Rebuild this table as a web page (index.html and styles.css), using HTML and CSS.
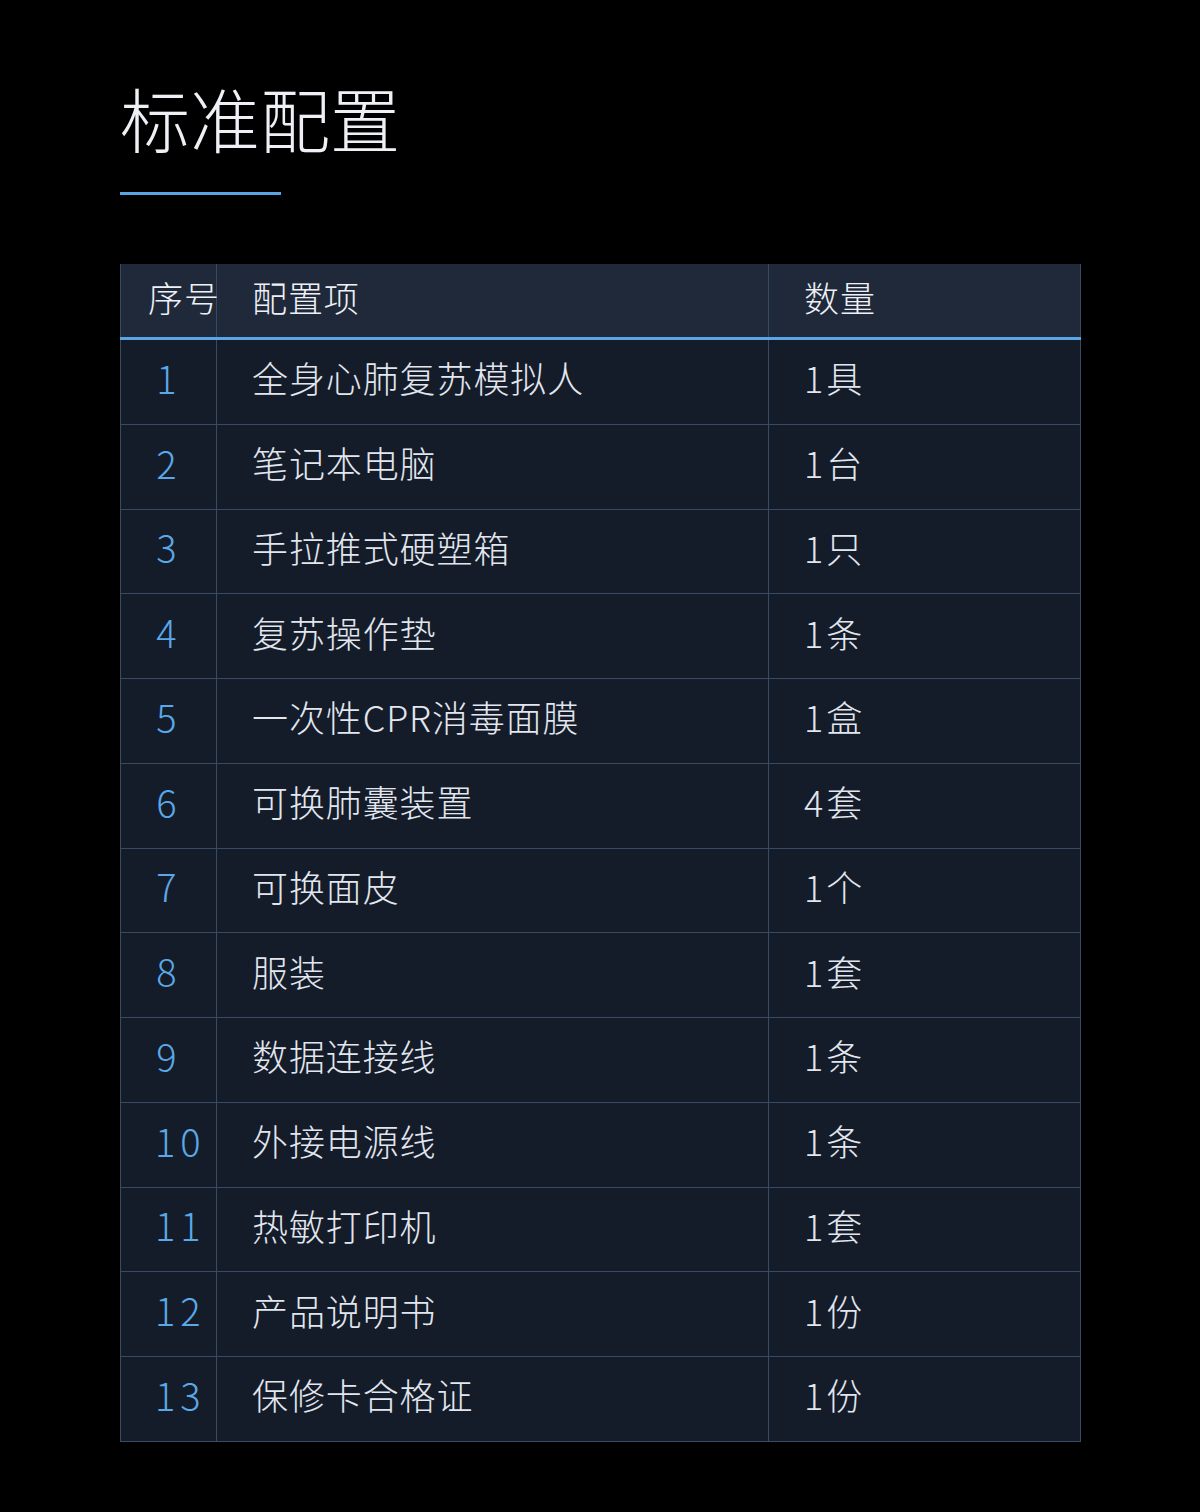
FILE: index.html
```html
<!DOCTYPE html>
<html lang="zh">
<head>
<meta charset="utf-8">
<title>标准配置</title>
<link rel="stylesheet" href="styles.css">
</head>
<body>
<main class="page">
  <h1 class="title">标准配置</h1>
  <div class="rule"></div>
  <table class="spec">
    <colgroup>
      <col class="w-no">
      <col class="w-item">
      <col class="w-qty">
    </colgroup>
    <thead>
      <tr><th class="c-no">序号</th><th class="c-item">配置项</th><th class="c-qty">数量</th></tr>
    </thead>
    <tbody>
      <tr><td class="c-no">1</td><td class="c-item">全身心肺复苏模拟人</td><td class="c-qty">1具</td></tr>
      <tr><td class="c-no">2</td><td class="c-item">笔记本电脑</td><td class="c-qty">1台</td></tr>
      <tr><td class="c-no">3</td><td class="c-item">手拉推式硬塑箱</td><td class="c-qty">1只</td></tr>
      <tr><td class="c-no">4</td><td class="c-item">复苏操作垫</td><td class="c-qty">1条</td></tr>
      <tr><td class="c-no">5</td><td class="c-item">一次性CPR消毒面膜</td><td class="c-qty">1盒</td></tr>
      <tr><td class="c-no">6</td><td class="c-item">可换肺囊装置</td><td class="c-qty">4套</td></tr>
      <tr><td class="c-no">7</td><td class="c-item">可换面皮</td><td class="c-qty">1个</td></tr>
      <tr><td class="c-no">8</td><td class="c-item">服装</td><td class="c-qty">1套</td></tr>
      <tr><td class="c-no">9</td><td class="c-item">数据连接线</td><td class="c-qty">1条</td></tr>
      <tr><td class="c-no">10</td><td class="c-item">外接电源线</td><td class="c-qty">1条</td></tr>
      <tr><td class="c-no">11</td><td class="c-item">热敏打印机</td><td class="c-qty">1套</td></tr>
      <tr><td class="c-no">12</td><td class="c-item">产品说明书</td><td class="c-qty">1份</td></tr>
      <tr><td class="c-no">13</td><td class="c-item">保修卡合格证</td><td class="c-qty">1份</td></tr>
    </tbody>
  </table>
</main>
</body>
</html>
```

FILE: styles.css
```css
html, body {
  margin: 0;
  padding: 0;
  background: #000;
}
body {
  width: 1200px;
  height: 1512px;
  font-family: "Noto Sans CJK SC", "Noto Sans", sans-serif;
  color: #e4e8ef;
}
.page {
  padding: 83px 0 0 120px;
}
.title {
  margin: 0;
  font-size: 70px;
  line-height: 70px;
  font-weight: 300;
  color: #eef0f5;
}
.rule {
  margin-top: 39px;
  width: 161px;
  height: 3px;
  background: #5aa5e6;
}
.spec {
  margin-top: 69px;
  width: 960px;
  border-collapse: collapse;
  table-layout: fixed;
}
.w-no { width: 96px; }
.w-item { width: 552px; }
.w-qty { width: 312px; }
.spec th, .spec td {
  border: 1px solid #394b63;
  padding: 0 0 9px 35px;
  text-align: left;
  white-space: nowrap;
  overflow: visible;
  letter-spacing: 0.9px;
}
.spec thead th {
  background: #1f293a;
  height: 64px;
  font-size: 35px;
  font-weight: 300;
  color: #eef0f5;
  border-top: none;
  border-bottom: 3px solid #5aa5e6;
  vertical-align: middle;
}
.spec tbody td {
  background: #141c2a;
  height: 74.75px;
  font-size: 36px;
  font-weight: 300;
  color: #e2e6ee;
  vertical-align: middle;
}
.spec th.c-no {
  padding-left: 27px;
}
.spec td.c-no {
  padding-left: 31px;
  padding-right: 33px;
  text-align: center;
  color: #5aa8e8;
  font-weight: 300;
  font-size: 38px;
  letter-spacing: 5px;
}
.spec td.c-no:not(:empty) {
  text-indent: 3px;
}
.spec td.c-qty {
  letter-spacing: 3px;
}
```
